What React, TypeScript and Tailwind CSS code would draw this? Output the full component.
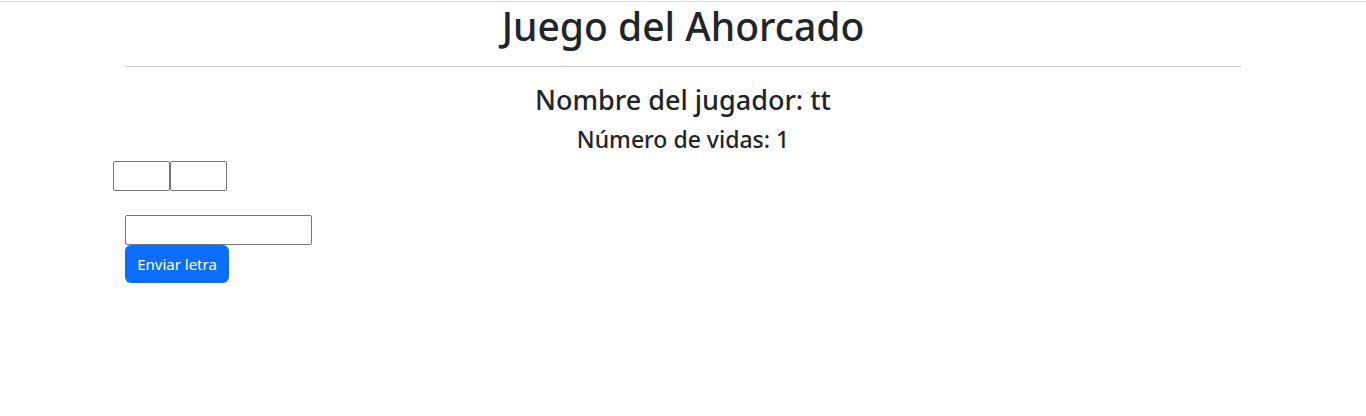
import React from "react";

export default function App() {
  return (
    <div className="min-h-[416px] bg-white text-[#212529]" style={{ fontFamily: '"Noto Sans", "Open Sans", sans-serif' }}>
      <div className="pt-px">
        <div className="h-px bg-[#dcdcdc]" />
      </div>
      <div className="mx-auto w-[1140px] px-3">
        <h1 className="mb-2 text-center text-[39px] font-medium leading-[48px]">Juego del Ahorcado</h1>
        <hr className="my-4 border-t border-[#c8c9ca]" />
        <h3 className="mb-2 text-center text-[27px] font-medium leading-[33.6px]">Nombre del jugador: tt</h3>
        <h4 className="mb-2 text-center text-[23px] font-medium leading-[28.8px]">Número de vidas: 1</h4>
        <div className="-mx-3 flex">
          <input className="h-[30px] w-[57px] rounded-[2px] border border-[#767676] px-0.5" />
          <input className="h-[30px] w-[57px] rounded-[2px] border border-[#767676] px-0.5" />
        </div>
        <form className="mt-6 flex flex-col items-start" onSubmit={(e) => e.preventDefault()}>
          <input type="text" className="h-[30px] w-[187px] rounded-[2px] border border-[#767676] px-0.5" />
          <button
            type="submit"
            className="h-[38px] w-[104px] rounded-[6px] bg-[#0d6efd] text-[15px] font-normal text-white"
          >
            Enviar letra
          </button>
        </form>
      </div>
    </div>
  );
}
